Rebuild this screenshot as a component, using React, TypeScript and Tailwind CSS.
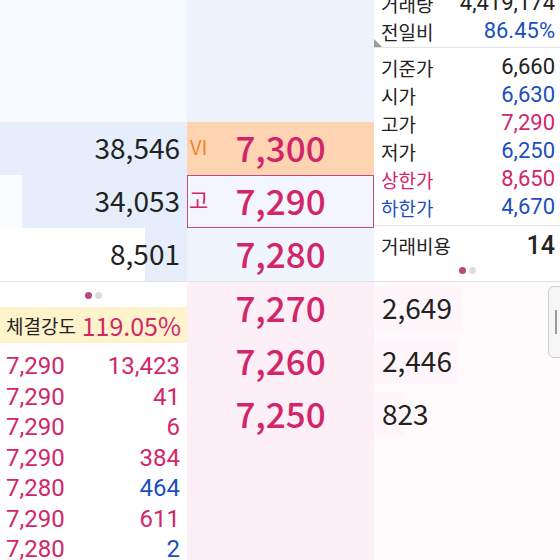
import React from 'react';

const PINK = 'text-[#d3266a]';
const BLUE = 'text-[#1b4fc0]';
const font = { fontFamily: '"Noto Sans CJK KR", "Noto Sans", sans-serif' };

type Info = { label: string; value: string; labelColor?: string; valueColor?: string; valueSize?: string };

const infoTop: Info[] = [
  { label: '거래량', value: '4,419,174' },
  { label: '전일비', value: '86.45%', valueColor: BLUE },
];

const infoMid: Info[] = [
  { label: '기준가', value: '6,660' },
  { label: '시가', value: '6,630', valueColor: BLUE },
  { label: '고가', value: '7,290', valueColor: PINK },
  { label: '저가', value: '6,250', valueColor: BLUE },
  { label: '상한가', value: '8,650', labelColor: PINK, valueColor: PINK },
  { label: '하한가', value: '4,670', labelColor: BLUE, valueColor: BLUE },
];

const ticks = [
  { price: '7,290', qty: '13,423', blue: false },
  { price: '7,290', qty: '41', blue: false },
  { price: '7,290', qty: '6', blue: false },
  { price: '7,290', qty: '384', blue: false },
  { price: '7,280', qty: '464', blue: true },
  { price: '7,290', qty: '611', blue: false },
  { price: '7,280', qty: '2', blue: true },
];

const InfoRow = ({ label, value, labelColor, valueColor, valueSize }: Info) => (
  <div className="flex items-center justify-between h-[28px] pl-[7px] pr-[5px] leading-none">
    <span className={`text-[19px] ${labelColor ?? 'text-[#222]'}`}>{label}</span>
    <span className={`${valueSize ?? 'text-[22px]'} font-['Roboto',sans-serif] ${valueColor ?? 'text-[#222]'}`}>{value}</span>
  </div>
);

const Dots = () => (
  <div className="flex items-center justify-center gap-[3px]">
    <span className="w-[7px] h-[7px] rounded-full bg-[#b9497e]" />
    <span className="w-[7px] h-[7px] rounded-full bg-[#dcdcdc]" />
  </div>
);

export default function App() {
  return (
    <div className="w-[560px] h-[560px] overflow-hidden relative bg-white" style={font}>
      {/* upper half: bid quantities, prices, info */}
      <div className="flex h-[281px]">
        <div className="w-[187px] flex flex-col bg-[#f7fafe] leading-none">
          <div className="h-[122px]" />
          <div className="h-[53px] flex items-center justify-end pr-[7px] pb-[4px] bg-[#e5eefa] text-[28px] text-[#222]">38,546</div>
          <div className="h-[53px] flex bg-[#fbfcff]">
            <div className="w-[22px]" />
            <div className="flex-1 flex items-center justify-end pr-[7px] pb-[4px] bg-[#e5eefa] text-[28px] text-[#222]">34,053</div>
          </div>
          <div className="h-[53px] relative flex items-center justify-end pr-[7px] pb-[4px] bg-white text-[28px] text-[#222]">
            <div className="absolute right-0 top-0 bottom-0 w-[42px] bg-[#e5eefa]" />
            <span className="relative">8,501</span>
          </div>
        </div>
        <div className="w-[187px] flex flex-col bg-[#edf3fc] leading-none">
          <div className="h-[122px]" />
          <div className="h-[53px] relative flex items-center justify-center pb-[4px] bg-[#ffd4b3]">
            <span className="absolute left-[3px] text-[20px] text-[#f08428]">VI</span>
            <span className={`text-[35px] font-medium ${PINK}`}>7,300</span>
          </div>
          <div className="h-[53px] relative flex items-center justify-center pb-[4px] bg-[#f3f6fd] border border-[#c04c82]">
            <span className={`absolute left-[1px] text-[21px] ${PINK}`}>고</span>
            <span className={`text-[35px] font-medium ${PINK}`}>7,290</span>
          </div>
          <div className="h-[53px] flex items-center justify-center pb-[4px] bg-[#f0f4fc]">
            <span className={`text-[35px] font-medium ${PINK}`}>7,280</span>
          </div>
        </div>
        <div className="flex-1 flex flex-col bg-white overflow-hidden">
          <div className="-mt-[11px] shrink-0">
            {infoTop.map(r => <InfoRow key={r.label} {...r} />)}
          </div>
          <div className="relative border-b border-[#e3e3e3] h-[3px] shrink-0">
            <div className="absolute left-0 bottom-0 w-0 h-0 border-t-[8px] border-t-transparent border-l-[8px] border-l-[#9a9a9a]" />
          </div>
          <div className="pt-[5px] pb-[4px] border-b border-[#e3e3e3] shrink-0">
            {infoMid.map(r => <InfoRow key={r.label} {...r} />)}
          </div>
          <div className="pt-[5px] shrink-0">
            <InfoRow label="거래비용" value="14" valueSize="text-[25px] font-medium" />
          </div>
          <div className="mt-[8px] shrink-0">
            <Dots />
          </div>
        </div>
      </div>
      <div className="h-px bg-[#dfe3e8]" />
      {/* lower half: trade strength, offers, ticks */}
      <div className="flex h-[278px] overflow-hidden">
        <div className="w-[187px] flex flex-col bg-white leading-none">
          <div className="pt-[10px] h-[25px] shrink-0">
            <Dots />
          </div>
          <div className="h-[36px] shrink-0 flex items-center justify-between px-[6px] bg-[#fff3cb]">
            <span className="text-[19px] text-[#222]">체결강도</span>
            <span className={`text-[25px] ${PINK}`}>119.05%</span>
          </div>
          <div className="pt-[8px] shrink-0 font-['Roboto',sans-serif]">
            {ticks.map((t, i) => (
              <div key={i} className="h-[30.5px] flex items-center justify-between pl-[6px] pr-[7px] text-[24px]">
                <span className={PINK}>{t.price}</span>
                <span className={t.blue ? BLUE : PINK}>{t.qty}</span>
              </div>
            ))}
          </div>
        </div>
        <div className="w-[187px] flex flex-col bg-[#fdeff6] leading-none">
          {['7,270', '7,260', '7,250'].map(p => (
            <div key={p} className="h-[53px] flex items-center justify-center pb-[4px]">
              <span className={`text-[35px] font-medium ${PINK}`}>{p}</span>
            </div>
          ))}
        </div>
        <div className="flex-1 flex flex-col bg-[#fffafc] leading-none">
          {[{ q: '2,649', w: 'w-[88px]' }, { q: '2,446', w: 'w-[84px]' }, { q: '823', w: 'w-[30px]' }].map(r => (
            <div key={r.q} className="h-[53px] relative flex items-center pl-[8px] pb-[4px] text-[28px] text-[#222]">
              <div className={`absolute left-0 top-[4px] bottom-[4px] ${r.w} bg-[#fef6fa]`} />
              <span className="relative">{r.q}</span>
            </div>
          ))}
        </div>
      </div>
      {/* scroll handle */}
      <div className="absolute left-[548px] top-[286px] w-[20px] h-[72px] rounded-[6px] border border-[#cfcfcf] bg-[#f6f6f6] flex items-center pl-[6px]">
        <div className="w-[2px] h-[24px] bg-[#9c9c9c]" />
      </div>
    </div>
  );
}
